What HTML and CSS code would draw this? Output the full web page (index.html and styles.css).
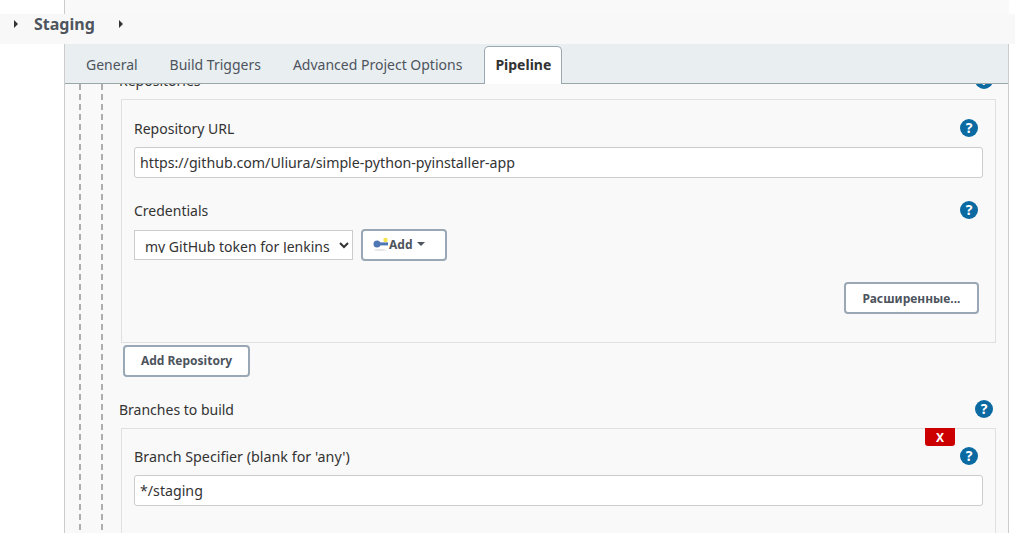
FILE: index.html
```html
<!DOCTYPE html>
<html lang="en">
<head>
  <meta charset="UTF-8">
  <title>Staging Config</title>
  <link rel="stylesheet" href="styles.css">
</head>
<body>
  <div class="top-strip"></div>
  <div class="breadcrumb">
    <span class="crumb-arrow"></span>
    <span class="crumb-name">Staging</span>
    <span class="crumb-arrow"></span>
  </div>

  <div class="panel">
    <div class="tabs">
      <a class="tab">General</a>
      <a class="tab">Build Triggers</a>
      <a class="tab">Advanced Project Options</a>
      <a class="tab active">Pipeline</a>
    </div>

    <div class="scroll">
      <div class="guide-outer">
        <div class="guide-inner">

          <div class="section-head repo-head">
            <span>Repositories</span>
            <span class="help">?</span>
          </div>

          <div class="box repo-box">
            <div class="field-head">
              <label>Repository URL</label>
              <span class="help">?</span>
            </div>
            <input class="text-input" type="text" value="https://github.com/Uliura/simple-python-pyinstaller-app">

            <div class="field-head cred-head">
              <label>Credentials</label>
              <span class="help">?</span>
            </div>
            <div class="cred-row">
              <select class="cred-select">
                <option>my GitHub token for Jenkins</option>
              </select>
              <button class="btn add-btn">
                <svg class="key" width="16" height="14" viewBox="0 0 16 14">
                  <ellipse cx="7" cy="13" rx="6" ry="1" fill="#e6e6e6"/>
                  <circle cx="4" cy="7" r="3.5" fill="#4f76b5"/>
                  <rect x="6" y="5.4" width="9" height="3" fill="#4f76b5"/>
                  <circle cx="12.5" cy="3" r="2.2" fill="#f7e34b"/>
                </svg>
                <span>Add</span>
                <span class="caret"></span>
              </button>
            </div>
            <div class="advanced-row">
              <button class="btn advanced-btn">Расширенные...</button>
            </div>
          </div>

          <button class="btn add-repo">Add Repository</button>

          <div class="section-head branch-head">
            <span>Branches to build</span>
            <span class="help">?</span>
          </div>

          <div class="box branch-box">
            <button class="remove">X</button>
            <div class="field-head">
              <label class="wide-label">Branch Specifier (blank for 'any')</label>
              <span class="help">?</span>
            </div>
            <input class="text-input" type="text" value="*/staging">
          </div>

        </div>
      </div>
    </div>
  </div>
</body>
</html>
```

FILE: styles.css
```css
html, body { margin: 0; height: 533px; overflow: hidden; background: #fff; }
body { font-family: "Noto Sans", sans-serif; font-size: 14px; color: #333; }

.top-strip { height: 14px; margin-left: 64px; width: 945px; background: #f9f9f9; border-left: 1px solid #ccc; box-sizing: border-box; }

.breadcrumb { height: 30px; box-sizing: border-box; padding-bottom: 10px; display: flex; align-items: center; background: #f8f8f8; color: #4d545d; }
.crumb-name { font-size: 16px; font-weight: 700; margin: 0 24px 0 16px; }
.crumb-arrow { width: 0; height: 0; border-left: 4px solid #333; border-top: 4px solid transparent; border-bottom: 4px solid transparent; }
.crumb-arrow:first-child { margin-left: 14px; }

.panel { margin-left: 64px; width: 945px; height: 489px; box-sizing: border-box; border-left: 1px solid #ccc; border-right: 1px solid #ccc; background: #f9f9f9; }

.tabs { height: 40px; box-sizing: border-box; display: flex; align-items: flex-end; padding-left: 5px; background: #e9eef1; border-bottom: 1px solid #9aa7a9; }
.tab { height: 38px; line-height: 40px; padding: 0 16px; color: #4d545d; }
.tab.active { height: 38px; line-height: 36px; box-sizing: border-box; margin: 0 0 -1px 6px; padding: 0 10px; font-weight: 700; color: #333; background: #fff; border: 1px solid #9aa7b4; border-bottom: none; border-radius: 5px 5px 0 0; }

.scroll { height: 449px; overflow: hidden; }
.guide-outer, .guide-inner { background-image: repeating-linear-gradient(to bottom, #aeaeae 0, #aeaeae 6px, transparent 6px, transparent 10px); background-size: 2px 100%; background-repeat: no-repeat; }
.guide-outer { margin-left: 14px; padding-left: 22px; background-position: 0 5px; }
.guide-inner { padding: 0 12px 0 18px; margin-top: -15px; height: 520px; background-position: 0 5px; }

.section-head { display: flex; justify-content: space-between; align-items: center; height: 22px; padding-right: 3px; }

.box { position: relative; margin-left: 2px; box-sizing: border-box; padding: 0 12px; border: 1px solid #e0e0e0; background: #f9f9f9; }
.repo-box { height: 244px; margin-top: 8px; padding-top: 17px; }
.branch-box { height: 130px; margin-top: 8px; padding-top: 16px; }

.field-head { display: flex; justify-content: space-between; align-items: center; height: 22px; margin-bottom: 8px; padding-right: 5px; }
.cred-head { margin-top: 21px; margin-bottom: 8px; }
.wide-label { font-size: 14.3px; }

.help { width: 18px; height: 18px; border-radius: 50%; background: #0b6aa2; color: #fff; font-size: 14px; font-weight: 700; line-height: 18px; text-align: center; }

.text-input { display: block; width: 100%; height: 31px; box-sizing: border-box; padding: 0 5px; font: 14.2px "Noto Sans", sans-serif; color: #333; background: #fff; border: 1px solid #ccc; border-radius: 3px; }

.cred-row { display: flex; gap: 8px; align-items: center; }
.cred-select { width: 219px; height: 30px; box-sizing: border-box; padding: 5px 0 6px 6px; font: 14px "Noto Sans", sans-serif; color: #333; background: #fff; border: 1px solid #ccc; border-radius: 0; }

.btn { box-sizing: border-box; height: 32px; padding: 0 16px; font: 700 12px "Noto Sans", sans-serif; color: #4d545d; background: #fff; border: 2px solid #9aa7b4; border-radius: 4px; }
.add-btn { width: 86px; padding: 0 0 2px 10px; display: flex; align-items: center; }
.key { flex: none; }
.caret { margin-left: 5px; border-top: 4px solid #4d545d; border-left: 4px solid transparent; border-right: 4px solid transparent; }

.advanced-row { display: flex; justify-content: flex-end; margin-top: 21px; padding-right: 4px; }
.advanced-btn { width: 135px; padding: 0; }

.add-repo { display: block; width: 127px; margin: 2px 0 0 4px; padding: 0 0 2px; }
.branch-head { margin-top: 21px; }

.remove { position: absolute; top: -1px; right: 40px; width: 30px; height: 18px; padding: 0; font: 700 12px "Noto Sans", sans-serif; color: #fff; background: #c00; border: none; border-radius: 0 0 3px 3px; }
```
